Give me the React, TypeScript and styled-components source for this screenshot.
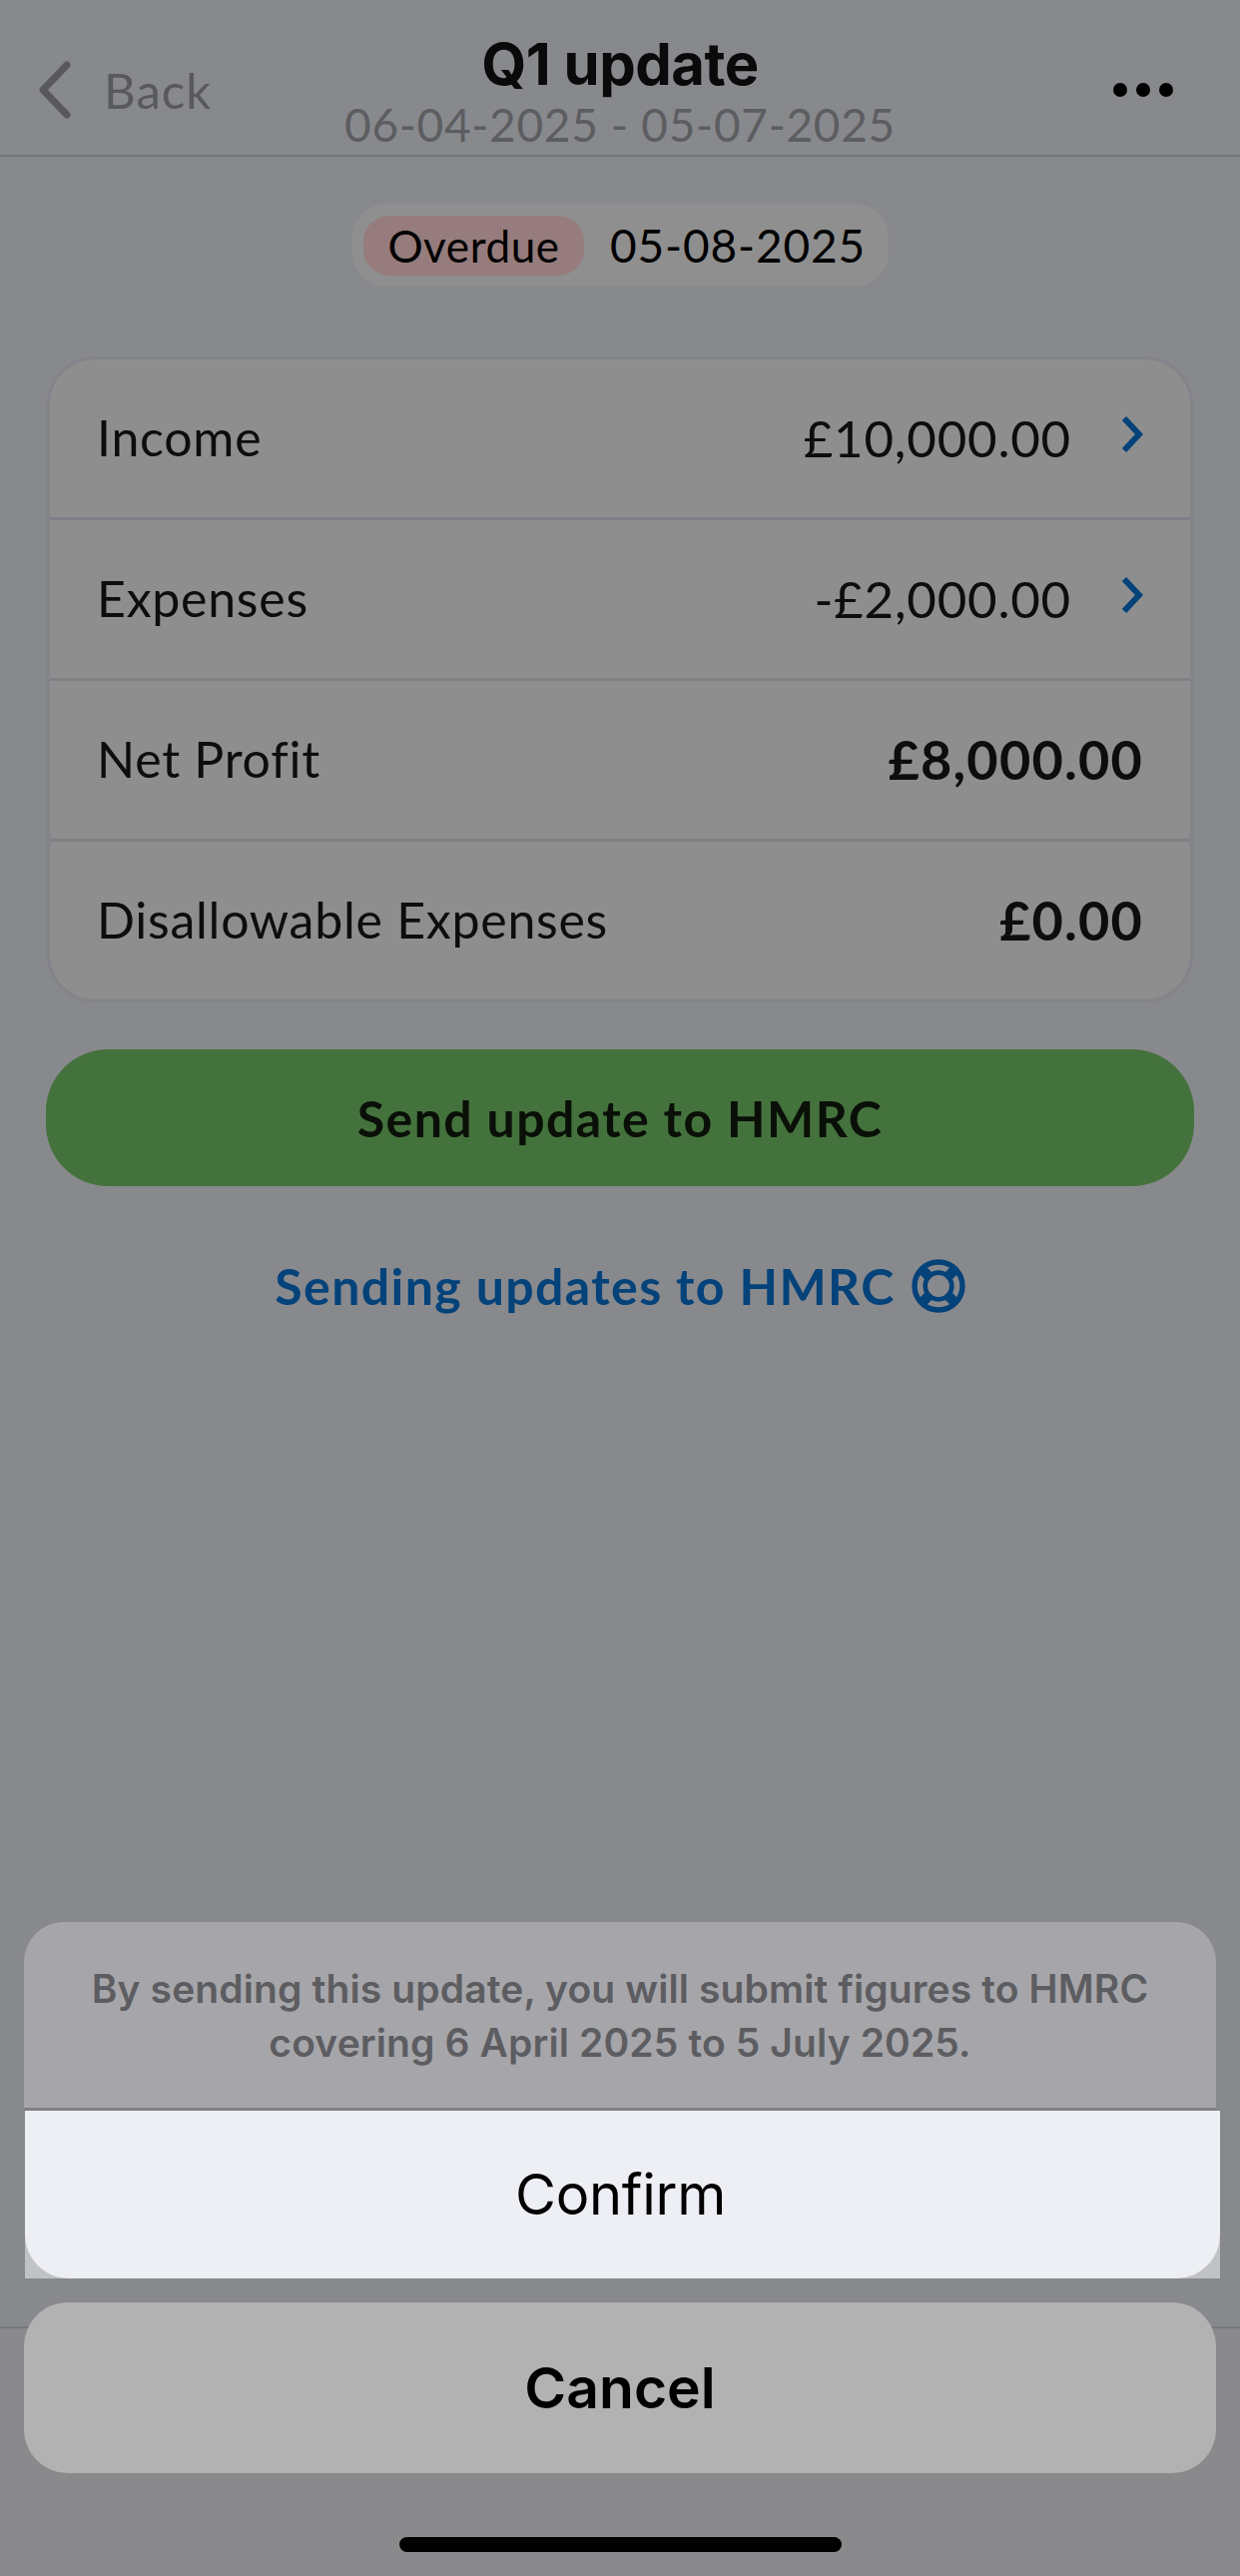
import styled, { createGlobalStyle } from "styled-components";

const GlobalStyle = createGlobalStyle`
  html, body {
    margin: 0;
    padding: 0;
    background: #8a8b8e;
  }
  * {
    box-sizing: border-box;
  }
`;

const Page = styled.div`
  position: relative;
  width: 1242px;
  height: 2580px;
  overflow: hidden;
  display: flex;
  flex-direction: column;
  background: #88898d;
  font-family: "Lato", "Liberation Sans", sans-serif;
  color: #000;
`;

const Header = styled.header`
  height: 157px;
  flex-shrink: 0;
  border-bottom: 2px solid #737479;
  padding: 32px 40px 0;
  display: grid;
  grid-template-columns: 1fr 560px 1fr;
`;

const BackLink = styled.div`
  display: flex;
  align-items: center;
  gap: 33px;
  height: 116px;
  margin-left: -3px;
  color: #58595b;
  font-size: 49px;
  letter-spacing: 1.1px;
`;

const TitleBlock = styled.div`
  display: flex;
  flex-direction: column;
  align-items: center;
`;

const Title = styled.h1`
  margin: 0;
  font-family: "Inter", sans-serif;
  font-size: 58px;
  font-weight: 700;
  line-height: 64px;
  letter-spacing: -0.5px;
  color: #0a0a0a;
`;

const DateRange = styled.div`
  margin-top: 4px;
  font-size: 46px;
  line-height: 50px;
  letter-spacing: 0.7px;
  color: #5c5d60;
`;

const MoreButton = styled.div`
  justify-self: end;
  margin-right: 27px;
  display: flex;
  gap: 9px;
  height: 116px;
  align-items: center;
`;

const Dot = styled.span`
  width: 14px;
  height: 14px;
  border-radius: 50%;
  background: #000;
`;

const PillRow = styled.div`
  display: flex;
  justify-content: center;
  margin-top: 47px;
`;

const DuePill = styled.div`
  height: 83px;
  width: 537px;
  margin-left: 1px;
  padding: 0 11px;
  display: flex;
  align-items: center;
  gap: 26px;
  border-radius: 34px;
  background: #8f8f8f;
`;

const StatusBadge = styled.span`
  width: 221px;
  height: 60px;
  border-radius: 26px;
  display: flex;
  align-items: center;
  justify-content: center;
  background: #967c7c;
  font-size: 44px;
  letter-spacing: 0.6px;
`;

const DueDate = styled.span`
  font-size: 46px;
  letter-spacing: 0.85px;
`;

const Card = styled.section`
  margin: 70px 47px 0 47px;
  height: 647px;
  border: 3px solid #83848a;
  border-radius: 48px;
  background: #8e8e8e;
  display: flex;
  flex-direction: column;
  overflow: hidden;
`;

const Row = styled.div`
  flex: 1;
  display: flex;
  align-items: center;
  padding: 0 47px 2px 47px;
  font-size: 50px;
  color: #0d0d0d;

  & + & {
    border-top: 3px solid #7f8086;
  }
`;

const RowLabel = styled.span`
  letter-spacing: 0.75px;
`;

const RowValue = styled.span<{ $bold?: boolean }>`
  margin-left: auto;
  font-size: ${(p) => (p.$bold ? 54 : 51)}px;
  font-weight: ${(p) => (p.$bold ? 700 : 400)};
  letter-spacing: ${(p) => (p.$bold ? 1.2 : 0.8)}px;
`;

const RowChevron = styled.svg`
  width: 22px;
  height: 36px;
  margin-left: 50px;
  margin-top: -6px;
`;

const SendButton = styled.button`
  display: block;
  margin: 47px 46px 0;
  width: 1150px;
  height: 137px;
  flex-shrink: 0;
  border: 0;
  border-radius: 62px;
  background: #44723c;
  color: #0a0f08;
  font-family: inherit;
  font-size: 50px;
  font-weight: 700;
  letter-spacing: 1.4px;
`;

const HelpLink = styled.div`
  margin-top: 69px;
  display: flex;
  justify-content: center;
  align-items: center;
  gap: 16px;
  color: #04427a;
  font-size: 50px;
  font-weight: 700;
  line-height: 62px;
  letter-spacing: 1.4px;
`;

const TabBar = styled.div`
  margin-top: auto;
  height: 250px;
  flex-shrink: 0;
  border-top: 2px solid #77787c;
  background: #8a8a8c;
`;

const Sheet = styled.div`
  position: absolute;
  left: 24px;
  top: 1925px;
  width: 1194px;
  font-family: "Inter", sans-serif;
`;

const SheetMessage = styled.div`
  height: 189px;
  padding: 40px 40px 0;
  border-radius: 40px 40px 0 0;
  border-bottom: 3px solid #808085;
  background: #a6a6aa;
  color: #5d5d61;
  text-align: center;
  font-size: 39px;
  font-weight: 600;
  line-height: 54px;
  letter-spacing: 0.12px;
`;

const ConfirmWrap = styled.div`
  width: 1197px;
  height: 168px;
  margin-left: 1px;
  background: #c0c2c6;
`;

const ConfirmButton = styled.button`
  display: block;
  width: 100%;
  height: 100%;
  padding: 0 4px 0 0;
  border: 0;
  border-radius: 0 0 44px 44px;
  background: #eeeff4;
  color: #000;
  font-family: inherit;
  font-size: 56px;
  font-weight: 400;
  letter-spacing: -0.3px;
`;

const CancelButton = styled.button`
  display: block;
  width: 100%;
  height: 171px;
  margin-top: 24px;
  border: 0;
  border-radius: 44px;
  background: #b2b2b2;
  color: #000;
  font-family: inherit;
  font-size: 57px;
  font-weight: 600;
`;

const HomeIndicator = styled.div`
  position: absolute;
  left: 400px;
  top: 2541px;
  width: 443px;
  height: 15px;
  border-radius: 8px;
  background: #000;
`;

function Chevron() {
  return (
    <RowChevron viewBox="0 0 22 36" fill="none">
      <path d="M3 2 L18 18 L3 34" stroke="#04427a" strokeWidth="6" />
    </RowChevron>
  );
}

function LifeBuoyIcon() {
  return (
    <svg width="54" height="54" viewBox="0 0 54 54" fill="none" stroke="#04427a">
      <circle cx="27" cy="27" r="24" strokeWidth="5.4" />
      <circle cx="27" cy="27" r="13.3" strokeWidth="4.7" />
      <path d="M10 10 L18 18 M44 10 L36 18 M10 44 L18 36 M44 44 L36 36" strokeWidth="10" />
    </svg>
  );
}

export default function App() {
  return (
    <Page>
      <GlobalStyle />
      <Header>
        <BackLink>
          <svg width="34" height="58" viewBox="0 0 34 58" fill="none">
            <path
              d="M30 4 L6 29 L30 54"
              stroke="#58595b"
              strokeWidth="7"
              strokeLinecap="round"
              strokeLinejoin="round"
            />
          </svg>
          Back
        </BackLink>
        <TitleBlock>
          <Title>Q1 update</Title>
          <DateRange>06-04-2025 - 05-07-2025</DateRange>
        </TitleBlock>
        <MoreButton>
          <Dot />
          <Dot />
          <Dot />
        </MoreButton>
      </Header>

      <PillRow>
        <DuePill>
          <StatusBadge>Overdue</StatusBadge>
          <DueDate>05-08-2025</DueDate>
        </DuePill>
      </PillRow>

      <Card>
        <Row>
          <RowLabel>Income</RowLabel>
          <RowValue>£10,000.00</RowValue>
          <Chevron />
        </Row>
        <Row>
          <RowLabel>Expenses</RowLabel>
          <RowValue>-£2,000.00</RowValue>
          <Chevron />
        </Row>
        <Row>
          <RowLabel>Net Profit</RowLabel>
          <RowValue $bold>£8,000.00</RowValue>
        </Row>
        <Row>
          <RowLabel>Disallowable Expenses</RowLabel>
          <RowValue $bold>£0.00</RowValue>
        </Row>
      </Card>

      <SendButton>Send update to HMRC</SendButton>

      <HelpLink>
        Sending updates to HMRC
        <LifeBuoyIcon />
      </HelpLink>

      <TabBar />

      <Sheet>
        <SheetMessage>
          By sending this update, you will submit figures to HMRC
          <br />
          covering 6 April 2025 to 5 July 2025.
        </SheetMessage>
        <ConfirmWrap>
          <ConfirmButton>Confirm</ConfirmButton>
        </ConfirmWrap>
        <CancelButton>Cancel</CancelButton>
      </Sheet>

      <HomeIndicator />
    </Page>
  );
}
